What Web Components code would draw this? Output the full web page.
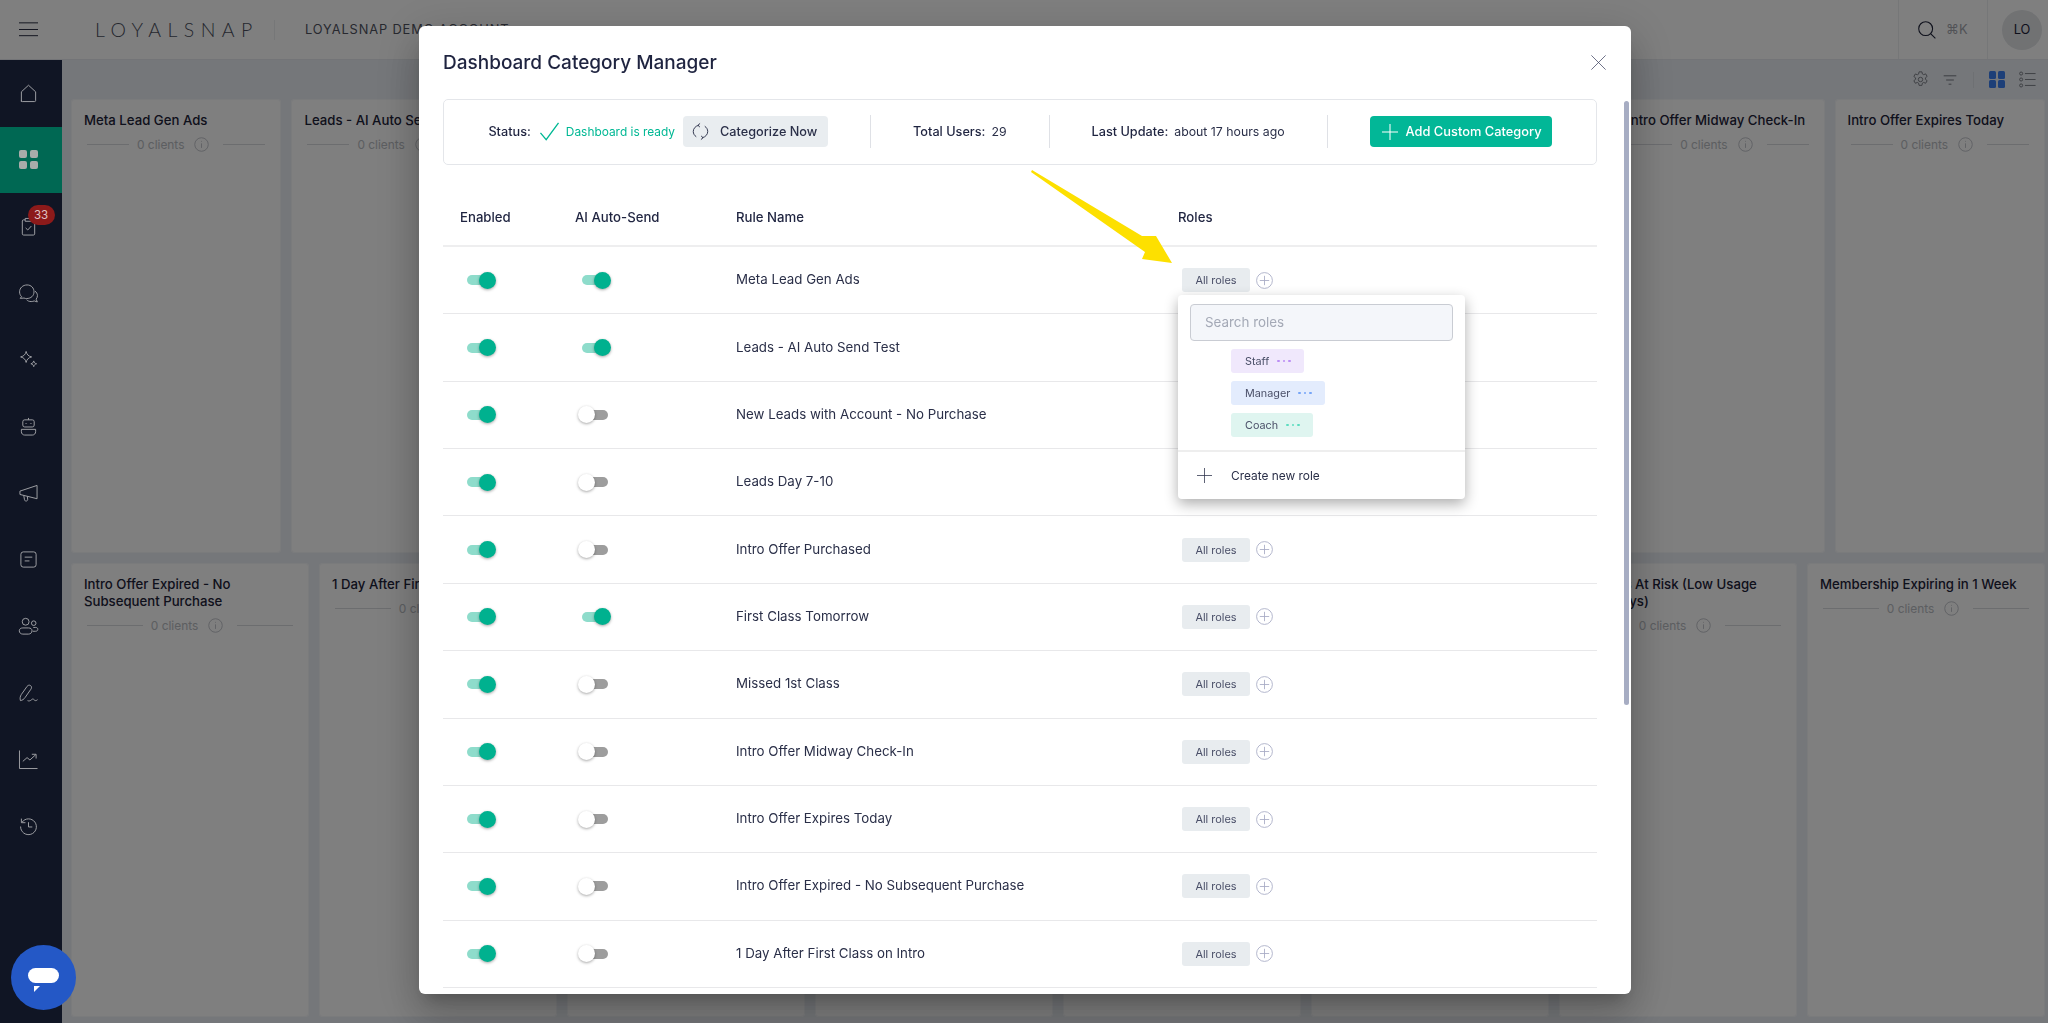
<!doctype html>
<html lang="en">
<head>
<meta charset="UTF-8">
<title>Dashboard Category Manager</title>
<style>
  html, body { margin: 0; height: 100%; overflow: hidden; font-family: Inter, "Liberation Sans", sans-serif; background: #eaeef4; }
  body { display: grid; grid-template-columns: 62px 1fr; grid-template-rows: 60px 1fr; height: 1023px; }
  app-topbar { grid-column: 1 / 3; }
</style>
</head>
<body>
<app-topbar></app-topbar>
<app-sidebar></app-sidebar>
<app-board></app-board>
<category-modal></category-modal>
<chat-launcher></chat-launcher>

<script>
  // icon paths, all drawn on a 20x20 box
  const ICONS = {
    menu: '<path d="M0 3h20M0 10h20M0 16.500h20"/>',
    home: '<path d="M2.500 18.500V8.200L10 1.300l7.500 6.900v9.300c0 .6-.4 1-1 1h-13c-.6 0-1-.4-1-1z"/>',
    clipboard: '<path d="M6.500 3H4.800C4 3 3.500 3.500 3.500 4.200v13.600c0 .7.5 1.200 1.300 1.200h10.400c.8 0 1.300-.5 1.300-1.200V4.200C16.500 3.500 16 3 15.200 3H13.500M6.500 1.500h7v3h-7zM7 11.500l2.200 2.200L13 9.500"/>',
    chat: '<path d="M8.500 1C4 1 .6 4.200.6 8.300c0 2 .8 3.700 2.100 5l-1.400 1.800 4-.3c.9.4 1.800.5 2.800.5 4.500 0 7.700-3 7.700-7S13 1 8.500 1z"/><path d="M16.800 7.500c1.600 1.100 2.600 2.800 2.600 4.700 0 1.500-.5 2.800-1.400 3.800l1.300 2.900-3.300-1.100c-1 .5-2 .7-3.200.7-2 0-3.700-.7-4.800-1.900"/>',
    spark: '<path d="M7.500 1.500c.7 3.200 2.300 5 5.800 5.800-3.500.8-5.100 2.600-5.800 5.800-.7-3.200-2.300-5-5.800-5.800 3.500-.8 5.100-2.600 5.800-5.800zM15.500 11.500c.4 1.700 1.200 2.600 3 3-1.800.4-2.600 1.300-3 3-.4-1.700-1.200-2.600-3-3 1.800-.4 2.600-1.300 3-3z"/>',
    robot: '<rect x="4" y="3" width="12" height="7.500" rx="2"/><path d="M10 3V1M2.500 13h15v2.500c0 2-1.500 3.500-3.500 3.500H6c-2 0-3.500-1.500-3.500-3.500z"/><path d="M7.500 6.500v.6M12.500 6.500v.6" stroke-width="2"/>',
    megaphone: '<path d="M19 1.500v14L1 11V7.500zM5 12l.8 4.600c.2 1 1 1.500 2 1.300 1-.2 1.500-1 1.300-2L8.800 13"/>',
    doc: '<rect x="2" y="2" width="16" height="16" rx="2.500"/><path d="M6 7.500h8M6 11.500h5"/>',
    users: '<circle cx="7" cy="5" r="3.600"/><circle cx="15.500" cy="6.500" r="2.400"/><path d="M4 11.500h6c2.400 0 3.700 1.200 3.700 3 0 2.200-1.800 3.500-3.700 3.500H4c-2 0-3.700-1.300-3.700-3.500 0-1.800 1.500-3 3.700-3zM15 11h2.500c1.500 0 2.300.8 2.300 2s-.9 2-2.300 2H14.500"/>',
    sign: '<path d="M1.500 17.500c-.7-2.500-.3-4.500 1-6.500l6-8.500c1-1.300 2.500-1.700 3.700-.8 1.200.9 1.300 2.400.3 3.800l-6 8.600c-1.200 1.900-3 3.100-5 3.400zM19.500 16.500c-1.500 1.300-2.500 1.300-3.500.2-1-1.200-1.800-1.200-3 0-1 1-2.500 1.500-4 .8"/>',
    chart: '<path d="M.5 .5v19h19M4 12l4.500-4 3 2.500L17.500 5M13.500 4.500H18V9"/>',
    history: '<path d="M3.200 5.500A8.300 8.300 0 1 1 1.700 10M2.500 1.700v4.300h4.300M10 5.500v5h4"/>',
    search: '<circle cx="8.500" cy="8.500" r="7.700"/><path d="M14 14l5.300 5.300"/>',
    gear: '<circle cx="10" cy="10" r="2.600"/><path d="M8.300 1h3.400l.5 2.500 1.500.8 2.400-.9 1.700 3-2 1.600v1.800l2 1.600-1.700 3-2.400-.9-1.500.8-.5 2.600H8.300l-.5-2.600-1.500-.8-2.400.9-1.700-3 2-1.600V8.100l-2-1.600 1.700-3 2.400.9 1.500-.8z"/>',
    filter: '<path d="M1 4h18M4.500 10h11M8 16h4"/>',
    list: '<circle cx="2.500" cy="3" r="1.800"/><circle cx="2.500" cy="10" r="1.800"/><circle cx="2.500" cy="17" r="1.800"/><path d="M7 3h12.500M7 10h12.500M7 17h12.500"/>',
    info: '<circle cx="10" cy="10" r="9"/><path d="M10 8.500v6M10 5.200v1"/>',
    plusround: '<circle cx="10" cy="10" r="9.300"/><path d="M10 4.500v11M4.500 10h11"/>',
    plus: '<path d="M10 0v20M0 10h20"/>',
    close: '<path d="M.5 .5l19 19M19.500 .5l-19 19"/>',
    check: '<path d="M.5 11.500l6 7L19.500 1"/>',
    sync: '<path d="M7.800 2.700C4.200 3.500 1.500 6.500 1.500 10c0 2.500 1.400 4.800 3.500 6.200M12.200 17.300c3.600-.8 6.300-3.800 6.300-7.300 0-2.500-1.400-4.800-3.500-6.200M9.500 .5L7 2.700l2.300 2.100M10.500 19.500l2.500-2.200-2.300-2.100"/>',
    chevron: '<path d="M2 6l8 8 8-8"/>'
  }

  class LsIcon extends HTMLElement {
    connectedCallback() {
      const size = this.getAttribute('size') || 20
      const sw = this.getAttribute('sw') || 1
      this.attachShadow({mode: 'open'}).innerHTML = `
        <style>
          :host { display: inline-flex; flex: none; }
          svg { display: block; fill: none; stroke: currentColor; overflow: visible; }
        </style>
        <svg width="${size}" height="${size}" viewBox="0 0 20 20" stroke-width="${sw}">${ICONS[this.getAttribute('name')]}</svg>`
    }
  }
  customElements.define('ls-icon', LsIcon)

  class AppTopbar extends HTMLElement {
    constructor() {
      super()
      this.attachShadow({mode: 'open'}).innerHTML = `
        <style>
          :host { display: flex; align-items: center; height: 60px; box-sizing: border-box; background: #fff; border-bottom: 1px solid #e6e9ee; color: #1d2238; }
          .burger { margin: 0 0 0 19px; }
          .logo { margin-left: 57px; font: 300 19.500px Lato, sans-serif; letter-spacing: 6.400px; color: #4b4f5e; width: 179px; }
          .sep { width: 1px; height: 20px; background: #eceef1; }
          .acct { margin-left: 30px; font-size: 12.800px; letter-spacing: .9px; color: #50535f; display: flex; align-items: center; gap: 10px; }
          .acct ls-icon { color: #60636e; }
          .right { margin-left: auto; display: flex; align-items: stretch; height: 59px; }
          .search { width: 90px; box-sizing: border-box; border-left: 1px solid #eceef1; border-right: 1px solid #eceef1; display: flex; align-items: center; padding-left: 19px; gap: 10px; font-size: 12.800px; letter-spacing: .3px; color: #a3a5ad; }
          .search ls-icon { color: #1d2238; }
          .user { width: 60px; display: flex; align-items: center; padding-left: 14px; box-sizing: border-box; }
          .ava { width: 40px; height: 40px; border-radius: 50%; background: #e2e4e7; display: flex; align-items: center; justify-content: center; font-size: 12.800px; color: #1d2238; }
        </style>
        <ls-icon class="burger" name="menu" size="19"></ls-icon>
        <div class="logo">LOYALSNAP</div>
        <div class="sep"></div>
        <div class="acct">LOYALSNAP DEMO ACCOUNT <ls-icon name="chevron" size="11"></ls-icon></div>
        <div class="right">
          <div class="search"><ls-icon name="search" size="18" sw="1.200"></ls-icon>⌘K</div>
          <div class="user"><div class="ava">LO</div></div>
        </div>`
    }
  }
  customElements.define('app-topbar', AppTopbar)

  class AppSidebar extends HTMLElement {
    constructor() {
      super()
      const items = ['home', 'grid', 'clipboard', 'chat', 'spark', 'robot', 'megaphone', 'doc', 'users', 'sign', 'chart', 'history']
      const html = items.map(n => {
        if (n === 'grid') return `<div class="item on"><span class="grid"><i></i><i></i><i></i><i></i></span></div>`
        const badge = n === 'clipboard' ? '<span class="badge">33</span>' : ''
        return `<div class="item"><ls-icon name="${n}" size="19"></ls-icon>${badge}</div>`
      }).join('')
      this.attachShadow({mode: 'open'}).innerHTML = `
        <style>
          :host { display: block; background: #101524; color: #a2a3a8; position: relative; z-index: 20; }
          .item { height: 66.670px; box-sizing: border-box; padding-right: 5px; display: flex; align-items: center; justify-content: center; position: relative; }
          .on { background: #006853; }
          .grid { display: grid; grid-template-columns: 8px 8px; gap: 3px; }
          .grid i { height: 8px; border-radius: 2px; background: #a8acaa; }
          .badge { position: absolute; left: 27.500px; top: 12px; width: 27px; height: 20px; border-radius: 10px; background: #8c1a1a; color: #e0c4c4; font-size: 11.500px; display: flex; align-items: center; justify-content: center; }
        </style>${html}`
    }
  }
  customElements.define('app-sidebar', AppSidebar)

  class BoardCard extends HTMLElement {
    constructor() {
      super()
      this.attachShadow({mode: 'open'}).innerHTML = `
        <style>
          :host { display: block; background: #fefefe; border-radius: 4px; box-shadow: inset 0 0 0 1px #f4f6f9; padding: 13px 13px 0; box-sizing: border-box; min-width: 0; }
          :host([empty]) .c { display: none; }
          .t { font-size: 13.200px; font-weight: 500; line-height: 17px; color: #1d2238; }
          .c { display: flex; align-items: center; margin: 8px 3px 0; font-size: 11.900px; color: #b9bcc2; }
          .c i { flex: 1; height: 1px; background: #d8dadf; }
          .c span { margin: 0 10px 0 8px; white-space: nowrap; }
          .c ls-icon { margin-right: 14px; color: #b0b3bb; }
        </style>
        <div class="t"><slot></slot></div>
        <div class="c"><i></i><span>0 clients</span><ls-icon name="info" size="15"></ls-icon><i></i></div>`
    }
  }
  customElements.define('board-card', BoardCard)

  class AppBoard extends HTMLElement {
    constructor() {
      super()
      // cards fully behind the dialog stay blank
      const top = ['Meta Lead Gen Ads', 'Leads - AI Auto Send Test', '', '', '', '', '', 'Intro Offer Midway Check-In', 'Intro Offer Expires Today']
      const bottom = ['Intro Offer Expired - No Subsequent Purchase', '1 Day After First Class on Intro', '', '', '', '', 'Members At Risk (Low Usage<br>14-30 Days)', 'Membership Expiring in 1 Week']
      const cards = a => a.map(t => `<board-card ${t ? '' : 'empty'}>${t}</board-card>`).join('')
      this.attachShadow({mode: 'open'}).innerHTML = `
        <style>
          :host { display: flex; flex-direction: column; padding: 0 3px 6px 9px; min-height: 0; color: #6d7079; }
          .tools { height: 39px; display: flex; align-items: center; justify-content: flex-end; }
          .tools .gear { margin-right: 14px; }
          .tools .sep { width: 1px; height: 16px; background: #dde0e6; margin: 0 15px 0 16px; }
          .blue { display: grid; grid-template-columns: 7.500px 7.500px; gap: 1.500px; margin-right: 14px; }
          .blue i { height: 7.500px; border-radius: 1.500px; background: #3a7ef0; }
          .tools .list { margin-right: 9px; }
          .rows { flex: 1; display: grid; grid-template-rows: 454px 454px; gap: 10px; }
          .r { display: grid; gap: 10px; min-width: 0; }
          .r1 { grid-template-columns: repeat(9, 1fr); }
          .r2 { grid-template-columns: repeat(8, 1fr); }
        </style>
        <div class="tools">
          <ls-icon class="gear" name="gear" size="17"></ls-icon>
          <ls-icon name="filter" size="14" sw="1.300"></ls-icon>
          <span class="sep"></span>
          <span class="blue"><i></i><i></i><i></i><i></i></span>
          <ls-icon class="list" name="list" size="17"></ls-icon>
        </div>
        <div class="rows">
          <div class="r r1">${cards(top)}</div>
          <div class="r r2">${cards(bottom)}</div>
        </div>`
    }
  }
  customElements.define('app-board', AppBoard)

  class ToggleSwitch extends HTMLElement {
    constructor() {
      super()
      this.attachShadow({mode: 'open'}).innerHTML = `
        <style>
          :host { display: inline-block; position: relative; width: 33px; height: 17px; flex: none; }
          .track { position: absolute; left: 4px; top: 3.500px; width: 26px; height: 10px; border-radius: 5px; background: #9d9d9d; }
          .knob { position: absolute; left: 0; top: 0; width: 17px; height: 17px; border-radius: 50%; background: #fff; box-shadow: 0 1px 3px rgba(0,0,0,.35); }
          :host([on]) .track { background: #8edccb; }
          :host([on]) .knob { left: 16px; background: #00b18f; }
        </style>
        <div class="track"></div><div class="knob"></div>`
    }
  }
  customElements.define('toggle-switch', ToggleSwitch)

  class RoleChip extends HTMLElement {
    constructor() {
      super()
      this.attachShadow({mode: 'open'}).innerHTML = `
        <style>
          :host { display: inline-flex; align-items: center; height: 24px; padding: 0 13px 0 14px; gap: 8px; border-radius: 3px; font-size: 10.800px; color: #4a4f68; background: var(--bg); width: max-content; }
          .dots { display: flex; gap: 3px; }
          .dots i { width: 2.500px; height: 2.500px; border-radius: 50%; background: var(--dot); }
        </style>
        <slot></slot><span class="dots"><i></i><i></i><i></i></span>`
    }
  }
  customElements.define('role-chip', RoleChip)

  class RolePopup extends HTMLElement {
    constructor() {
      super()
      this.attachShadow({mode: 'open'}).innerHTML = `
        <style>
          :host { display: block; position: absolute; left: 759px; top: 269px; width: 287px; height: 204px; background: #fff; border-radius: 4px; box-shadow: 0 5px 14px rgba(0,0,0,.32); z-index: 5; }
          .search { margin: 8.500px 12px 0; height: 37px; box-sizing: border-box; border: 1px solid #c9ccd3; border-radius: 4px; background: #f4f6fa; padding-left: 14px; display: flex; align-items: center; font-size: 13.400px; color: #a4a9b6; }
          .list { display: flex; flex-direction: column; gap: 8px; padding: 8.500px 0 0 53px; }
          .staff { --bg: #f0e8fc; --dot: #bb8df5; }
          .manager { --bg: #e3ecfd; --dot: #75a5f7; }
          .coach { --bg: #dff5f0; --dot: #5cdcc0; }
          .create { margin-top: 13px; border-top: 2px solid #eee; height: 47px; display: flex; align-items: center; padding-left: 19px; gap: 19px; font-size: 11.900px; color: #2a2f48; }
        </style>
        <div class="search">Search roles</div>
        <div class="list">
          <role-chip class="staff">Staff</role-chip>
          <role-chip class="manager">Manager</role-chip>
          <role-chip class="coach">Coach</role-chip>
        </div>
        <div class="create"><ls-icon name="plus" size="15"></ls-icon>Create new role</div>`
    }
  }
  customElements.define('role-popup', RolePopup)

  class RuleRow extends HTMLElement {
    constructor() {
      super()
      const ai = this.hasAttribute('ai') ? 'on' : ''
      const covered = this.hasAttribute('covered')
      this.attachShadow({mode: 'open'}).innerHTML = `
        <style>
          :host { display: grid; grid-template-columns: 115px 161px 442px 1fr; align-items: center; height: 67.360px; box-sizing: border-box; border-bottom: 1px solid #e8e8ea; font-size: 13.300px; color: #2a2f48; }
          .tg { padding-left: 20px; display: flex; }
          .nm { padding: 0 0 2px 17px; }
          .ro { padding-left: 21px; display: flex; align-items: center; gap: 6px; color: #a6aac4; }
          .all { width: 68px; height: 24px; border-radius: 3px; background: #e8ecef; display: flex; align-items: center; justify-content: center; font-size: 10.900px; color: #4a4f68; }
        </style>
        <div class="tg"><toggle-switch on></toggle-switch></div>
        <div class="tg"><toggle-switch ${ai}></toggle-switch></div>
        <div class="nm"><slot></slot></div>
        ${covered ? '' : '<div class="ro"><span class="all">All roles</span><ls-icon name="plusround" size="17"></ls-icon></div>'}`
    }
  }
  customElements.define('rule-row', RuleRow)

  class StatusStrip extends HTMLElement {
    constructor() {
      super()
      this.attachShadow({mode: 'open'}).innerHTML = `
        <style>
          :host { display: flex; align-items: center; justify-content: center; gap: 42px; height: 66px; box-sizing: border-box; padding-bottom: 1px; border: 1px solid #e4e6ea; border-radius: 5px; font-size: 12.300px; color: #2a2f48; }
          .sep { width: 1px; height: 33px; background: #dfe1e6; }
          .g { display: flex; align-items: center; }
          b { font-weight: 500; font-size: 12.700px; color: #1f2440; margin-right: 6px; white-space: nowrap; }
          .ok { color: #00b894; font-size: 11.900px; margin: 0 8px 0 7px; white-space: nowrap; }
          .check { color: #00b894; margin-left: 3px; }
          button { all: unset; height: 31px; border-radius: 4px; display: inline-flex; align-items: center; font-size: 12.700px; font-weight: 500; box-sizing: border-box; white-space: nowrap; }
          .cat { background: #e9edf0; color: #2a2f48; width: 145px; padding-left: 9px; gap: 11px; }
          .add { background: #02b797; color: #fff; width: 182px; padding-left: 12px; gap: 8px; font-size: 12.850px; }
          .v { white-space: nowrap; }
        </style>
        <div class="g"><b>Status:</b><ls-icon class="check" name="check" size="19" sw="1.400"></ls-icon><span class="ok">Dashboard is ready</span>
          <button class="cat"><ls-icon name="sync" size="17" sw="1.100"></ls-icon>Categorize Now</button></div>
        <span class="sep"></span>
        <div class="g"><b>Total Users:</b><span class="v">29</span></div>
        <span class="sep"></span>
        <div class="g"><b>Last Update:</b><span class="v">about 17 hours ago</span></div>
        <span class="sep"></span>
        <button class="add"><ls-icon name="plus" size="16" sw="1.300"></ls-icon>Add Custom Category</button>`
    }
  }
  customElements.define('status-strip', StatusStrip)

  class CategoryModal extends HTMLElement {
    constructor() {
      super()
      const rules = [
        ['Meta Lead Gen Ads', 1], ['Leads - AI Auto Send Test', 1], ['New Leads with Account - No Purchase', 0],
        ['Leads Day 7-10', 0], ['Intro Offer Purchased', 0], ['First Class Tomorrow', 1], ['Missed 1st Class', 0],
        ['Intro Offer Midway Check-In', 0], ['Intro Offer Expires Today', 0],
        ['Intro Offer Expired - No Subsequent Purchase', 0], ['1 Day After First Class on Intro', 0]
      ]
      // rows 2-4 have their role cell under the open popup
      const rows = rules.map((r, i) => `<rule-row ${r[1] ? 'ai' : ''} ${i >= 1 && i <= 3 ? 'covered' : ''}>${r[0]}</rule-row>`).join('')
      this.attachShadow({mode: 'open'}).innerHTML = `
        <style>
          :host { position: fixed; inset: 0; z-index: 10; background: rgba(0,0,0,.5); display: block; }
          .dlg { position: absolute; left: 419px; top: 26px; width: 1212px; height: 968px; background: #fff; border-radius: 6px; overflow: hidden; color: #1f2440;
                 box-sizing: border-box; padding: 0 34px 0 24px; }
          .shadow { position: absolute; left: 419px; top: 26px; width: 1212px; height: 968px; border-radius: 6px; box-shadow: 0 11px 15px -7px rgba(0,0,0,.2), 0 24px 38px 3px rgba(0,0,0,.14), 0 9px 46px 8px rgba(0,0,0,.12); }
          .head { height: 73px; display: flex; align-items: center; justify-content: space-between; }
          h1 { margin: 0; font-size: 19px; font-weight: 500; color: #1f2440; }
          .head ls-icon { color: #3f4462; margin-right: -9px; }
          .cols { display: grid; grid-template-columns: 115px 161px 442px 1fr; align-items: center; height: 57px; margin-top: 25px; box-sizing: border-box; border-bottom: 2px solid #eeeeef; padding-bottom: 2px; font-size: 13.200px; font-weight: 500; color: #1f2440; }
          .cols span { padding-left: 17px; }
          .thumb { position: absolute; left: 1205px; top: 75px; width: 5px; height: 604px; border-radius: 3px; background: #a7adc3; }
          svg.arrow { position: absolute; left: 601px; top: 134px; z-index: 6; }
        </style>
        <div class="shadow"></div>
        <div class="dlg">
          <div class="head"><h1>Dashboard Category Manager</h1><ls-icon name="close" size="15"></ls-icon></div>
          <status-strip></status-strip>
          <div class="cols"><span>Enabled</span><span>AI Auto-Send</span><span>Rule Name</span><span>Roles</span></div>
          ${rows}
          <role-popup></role-popup>
          <div class="thumb"></div>
          <svg class="arrow" width="160" height="110" viewBox="0 0 160 110"><path fill="#fde000" d="M12 10L122 76H136L152 103L122 99L125 92L11 12Z"/></svg>
        </div>`
    }
  }
  customElements.define('category-modal', CategoryModal)

  class ChatLauncher extends HTMLElement {
    constructor() {
      super()
      this.attachShadow({mode: 'open'}).innerHTML = `
        <style>
          :host { position: fixed; left: 11px; top: 945px; width: 65px; height: 65px; border-radius: 50%; background: #2458c6; z-index: 30; display: block; }
          .pill { position: absolute; left: 17px; top: 23px; width: 31px; height: 15px; border-radius: 8px; background: #fff; }
          svg { position: absolute; left: 23px; top: 41px; }
        </style>
        <div class="pill"></div>
        <svg width="6" height="6" viewBox="0 0 6 6"><path d="M0 0h6L0 6z" fill="#fff"/></svg>`
    }
  }
  customElements.define('chat-launcher', ChatLauncher)
</script>
</body>
</html>
